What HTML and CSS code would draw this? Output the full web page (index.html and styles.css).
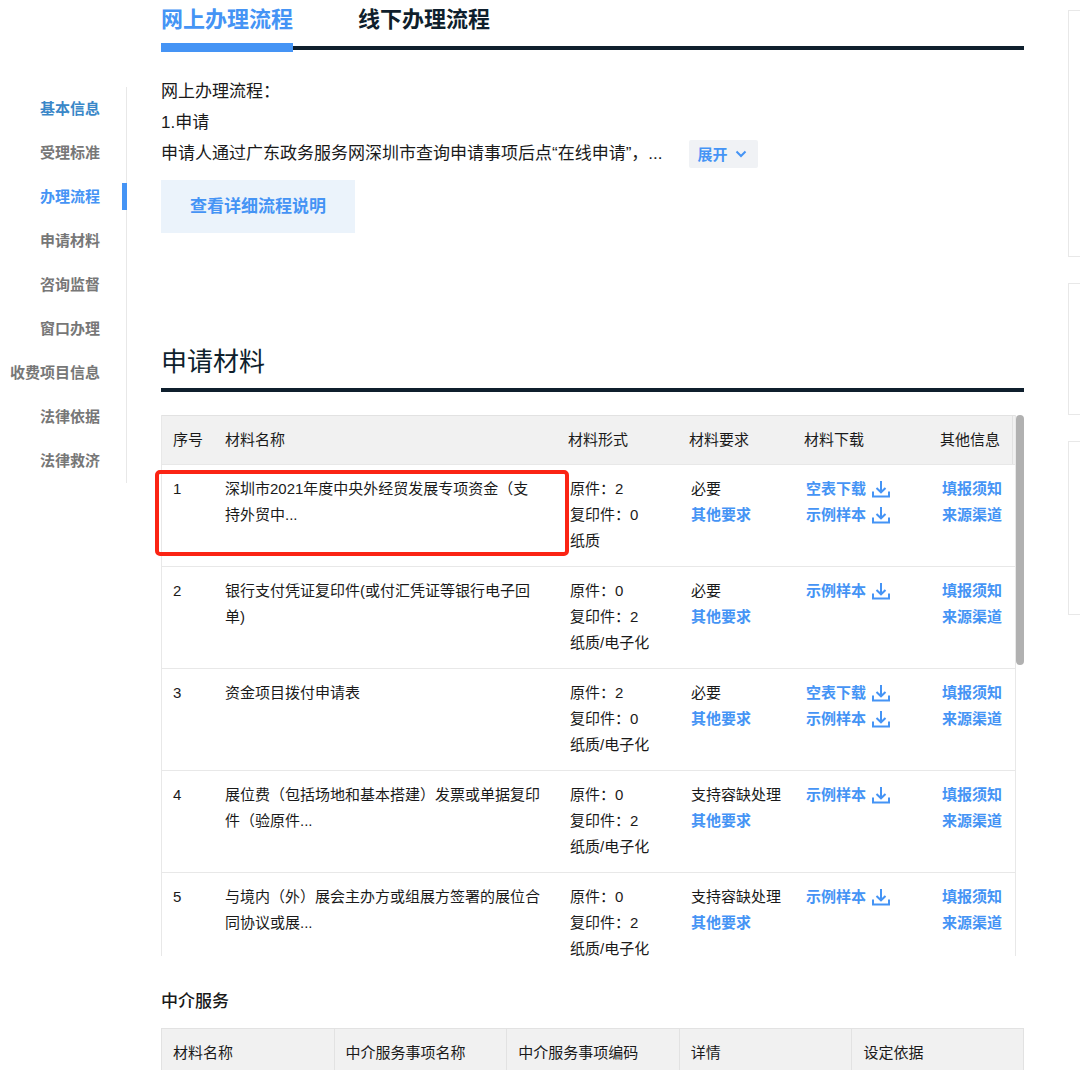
FILE: index.html
```html
<!DOCTYPE html>
<html lang="zh-CN">
<head>
    <meta charset="UTF-8">
    <meta name="viewport" content="width=device-width, initial-scale=1.0">
    <title>办事指南 - 广东政务服务网</title>
    <link rel="stylesheet" href="styles.css">
</head>
<body>

<svg class="icon-defs" aria-hidden="true">
    <symbol id="download" viewBox="0 0 18 18">
        <path d="M1 11.5V16.5H17V11.5M9 1V12M4.5 8L9 12.3L13.5 8" fill="none" stroke="currentColor" stroke-width="2"/>
    </symbol>
</svg>

<div class="page">
    <nav class="side-nav">
        <a href="#" class="visited">基本信息</a>
        <a href="#">受理标准</a>
        <a href="#" class="active">办理流程</a>
        <a href="#">申请材料</a>
        <a href="#">咨询监督</a>
        <a href="#">窗口办理</a>
        <a href="#">收费项目信息</a>
        <a href="#">法律依据</a>
        <a href="#">法律救济</a>
    </nav>

    <main class="main">
        <div class="tabs">
            <button type="button" class="tab active">网上办理流程</button>
            <button type="button" class="tab">线下办理流程</button>
        </div>

        <div class="process">
            <p>网上办理流程：</p>
            <p>1.申请</p>
            <p class="last-line">申请人通过广东政务服务网深圳市查询申请事项后点“在线申请”，...
                <button type="button" class="expand">展开
                    <svg width="12" height="8" viewBox="0 0 12 8"><path d="M1.5 1.5L6 6L10.5 1.5" fill="none" stroke="currentColor" stroke-width="2"/></svg>
                </button>
            </p>
            <button type="button" class="detail-btn">查看详细流程说明</button>
        </div>

        <h2>申请材料</h2>

        <div class="material">
            <div class="material-scroll">
                <table class="material-table">
                    <colgroup>
                        <col class="col-no">
                        <col class="col-name">
                        <col class="col-form">
                        <col class="col-need">
                        <col class="col-down">
                        <col class="col-info">
                    </colgroup>
                    <thead>
                        <tr>
                            <th>序号</th>
                            <th>材料名称</th>
                            <th>材料形式</th>
                            <th>材料要求</th>
                            <th>材料下载</th>
                            <th>其他信息</th>
                        </tr>
                    </thead>
                    <tbody>
                        <tr>
                            <td>1</td>
                            <td>深圳市2021年度中央外经贸发展专项资金（支持外贸中...</td>
                            <td>原件：2<br>复印件：0<br>纸质</td>
                            <td>必要<a href="#">其他要求</a></td>
                            <td>
                                <a href="#">空表下载<svg class="icon"><use href="#download"/></svg></a>
                                <a href="#">示例样本<svg class="icon"><use href="#download"/></svg></a>
                            </td>
                            <td><a href="#">填报须知</a><a href="#">来源渠道</a></td>
                        </tr>
                        <tr>
                            <td>2</td>
                            <td>银行支付凭证复印件(或付汇凭证等银行电子回单)</td>
                            <td>原件：0<br>复印件：2<br>纸质/电子化</td>
                            <td>必要<a href="#">其他要求</a></td>
                            <td>
                                <a href="#">示例样本<svg class="icon"><use href="#download"/></svg></a>
                            </td>
                            <td><a href="#">填报须知</a><a href="#">来源渠道</a></td>
                        </tr>
                        <tr>
                            <td>3</td>
                            <td>资金项目拨付申请表</td>
                            <td>原件：2<br>复印件：0<br>纸质/电子化</td>
                            <td>必要<a href="#">其他要求</a></td>
                            <td>
                                <a href="#">空表下载<svg class="icon"><use href="#download"/></svg></a>
                                <a href="#">示例样本<svg class="icon"><use href="#download"/></svg></a>
                            </td>
                            <td><a href="#">填报须知</a><a href="#">来源渠道</a></td>
                        </tr>
                        <tr>
                            <td>4</td>
                            <td>展位费（包括场地和基本搭建）发票或单据复印件（验原件...</td>
                            <td>原件：0<br>复印件：2<br>纸质/电子化</td>
                            <td>支持容缺处理<a href="#">其他要求</a></td>
                            <td>
                                <a href="#">示例样本<svg class="icon"><use href="#download"/></svg></a>
                            </td>
                            <td><a href="#">填报须知</a><a href="#">来源渠道</a></td>
                        </tr>
                        <tr>
                            <td>5</td>
                            <td>与境内（外）展会主办方或组展方签署的展位合同协议或展...</td>
                            <td>原件：0<br>复印件：2<br>纸质/电子化</td>
                            <td>支持容缺处理<a href="#">其他要求</a></td>
                            <td>
                                <a href="#">示例样本<svg class="icon"><use href="#download"/></svg></a>
                            </td>
                            <td><a href="#">填报须知</a><a href="#">来源渠道</a></td>
                        </tr>
                    </tbody>
                </table>
            </div>
            <div class="scroll-thumb"></div>
            <div class="mark"></div>
        </div>

        <h3>中介服务</h3>

        <div class="agency">
            <table class="agency-table">
                <thead>
                    <tr>
                        <th>材料名称</th>
                        <th>中介服务事项名称</th>
                        <th>中介服务事项编码</th>
                        <th>详情</th>
                        <th>设定依据</th>
                    </tr>
                </thead>
            </table>
        </div>
    </main>

    <aside class="panels">
        <div class="panel panel-large"></div>
        <div class="panel panel-small"></div>
        <div class="panel panel-medium"></div>
    </aside>
</div>

</body>
</html>
```

FILE: styles.css
```css
* {
    box-sizing: border-box;
}
body {
    margin: 0;
    background: #fff;
    color: #1a1a1a;
    font-family: "Liberation Sans", "Noto Sans CJK SC", sans-serif;
    font-size: 15px;
    line-height: 26px;
}
a {
    color: #4594f5;
    font-weight: bold;
    text-decoration: none;
}
button {
    padding: 0;
    border: none;
    background: none;
    font-family: inherit;
    font-weight: bold;
    cursor: pointer;
}
p, h2, h3 {
    margin: 0;
}
.icon-defs {
    display: none;
}
.page {
    display: grid;
    grid-template-columns: 127px minmax(0, 1fr) 12px;
    align-items: start;
}

/* 左侧导航 */
.side-nav {
    margin-top: 87px;
    border-right: 1px solid #e8e8e8;
}
.side-nav a {
    display: block;
    position: relative;
    padding-right: 26px;
    color: #777;
    line-height: 44px;
    text-align: right;
}
.side-nav .visited {
    color: #3a87c8;
}
.side-nav .active {
    color: #4594f5;
}
.side-nav .active::after {
    content: "";
    position: absolute;
    top: 8px;
    right: -1px;
    width: 5px;
    height: 27px;
    background: #4594f5;
}

.main {
    margin: 0 44px 0 34px;
}

/* 流程标签 */
.tabs {
    display: flex;
    gap: 65px;
    height: 50px;
    border-bottom: 4px solid #0f1f2d;
}
.tab {
    height: 52px;
    padding-bottom: 3px;
    border-bottom: 9px solid transparent;
    color: #0f1f2d;
    font-size: 22px;
    line-height: 40px;
}
.tab.active {
    border-color: #4594f5;
    color: #4594f5;
}

.process {
    margin-top: 26px;
    font-size: 17px;
    line-height: 31px;
}
.last-line {
    display: flex;
    align-items: center;
    gap: 26px;
}
.expand {
    display: flex;
    align-items: center;
    gap: 7px;
    height: 28px;
    padding: 0 11px 0 9px;
    border-radius: 2px;
    background: #f0f2f5;
    color: #4594f5;
    font-size: 15px;
}
.detail-btn {
    margin-top: 11px;
    padding: 0 29px;
    background: #ebf3fb;
    color: #4594f5;
    font-size: 17px;
    line-height: 53px;
}

h2 {
    margin-top: 107px;
    padding-bottom: 4px;
    border-bottom: 4px solid #0f1f2d;
    color: #0f1f2d;
    font-size: 26px;
    font-weight: normal;
    line-height: 44px;
}

/* 申请材料表格 */
.material {
    display: flex;
    align-items: flex-start;
    position: relative;
    margin-top: 23px;
}
.material-scroll {
    flex: 1;
    height: 541px;
    overflow: hidden;
}
.scroll-thumb {
    width: 8px;
    height: 250px;
    border-radius: 4px;
    background: #b1b1b1;
}
table {
    width: 100%;
    border-collapse: separate;
    border-spacing: 0;
    table-layout: fixed;
}
th {
    height: 50px;
    border-top: 1px solid #e2e2e2;
    border-bottom: 1px solid #e8e8e8;
    background: #f1f1f1;
    font-weight: normal;
    text-align: left;
}
.material-table {
    border: 1px solid #e8e8e8;
    border-top: none;
}
.material-table th {
    padding: 0 9px;
}
.material-table th:nth-child(-n+2) {
    padding-left: 11px;
}
.material-table th:last-child {
    box-shadow: inset -2px 0 #f1f1f1, inset -3px 0 #e2e2e2;
}
.material-table td {
    height: 102px;
    padding: 11px 0 12px 11px;
    border-bottom: 1px solid #e8e8e8;
    vertical-align: top;
}
.material-table td:nth-child(2) {
    padding-right: 18px;
}
.material-table a {
    display: flex;
    align-items: center;
    gap: 6px;
}
.col-no {
    width: 52px;
}
.col-form {
    width: 121px;
}
.col-need {
    width: 115px;
}
.col-down {
    width: 136px;
}
.col-info {
    width: 84px;
}
.icon {
    width: 18px;
    height: 18px;
}
/* 重点标注框 */
.mark {
    position: absolute;
    top: 55px;
    right: 455px;
    left: -6px;
    height: 86px;
    border: 4px solid #fb2414;
    border-radius: 5px;
}

/* 中介服务 */
h3 {
    margin: 33px 0 13px;
    font-size: 17px;
    font-weight: 500;
}
.agency {
    height: 42px;
    overflow: hidden;
}
.agency-table th {
    padding: 0 11px;
    border-left: 1px solid #e2e2e2;
}
.agency-table th:last-child {
    border-right: 1px solid #e2e2e2;
}

/* 右侧栏 */
.panels {
    display: grid;
    gap: 26px;
    padding-top: 10px;
}
.panel {
    border: 1px solid #e8e8e8;
    border-right: none;
}
.panel-large {
    height: 247px;
}
.panel-small {
    height: 132px;
}
.panel-medium {
    height: 174px;
}
```
